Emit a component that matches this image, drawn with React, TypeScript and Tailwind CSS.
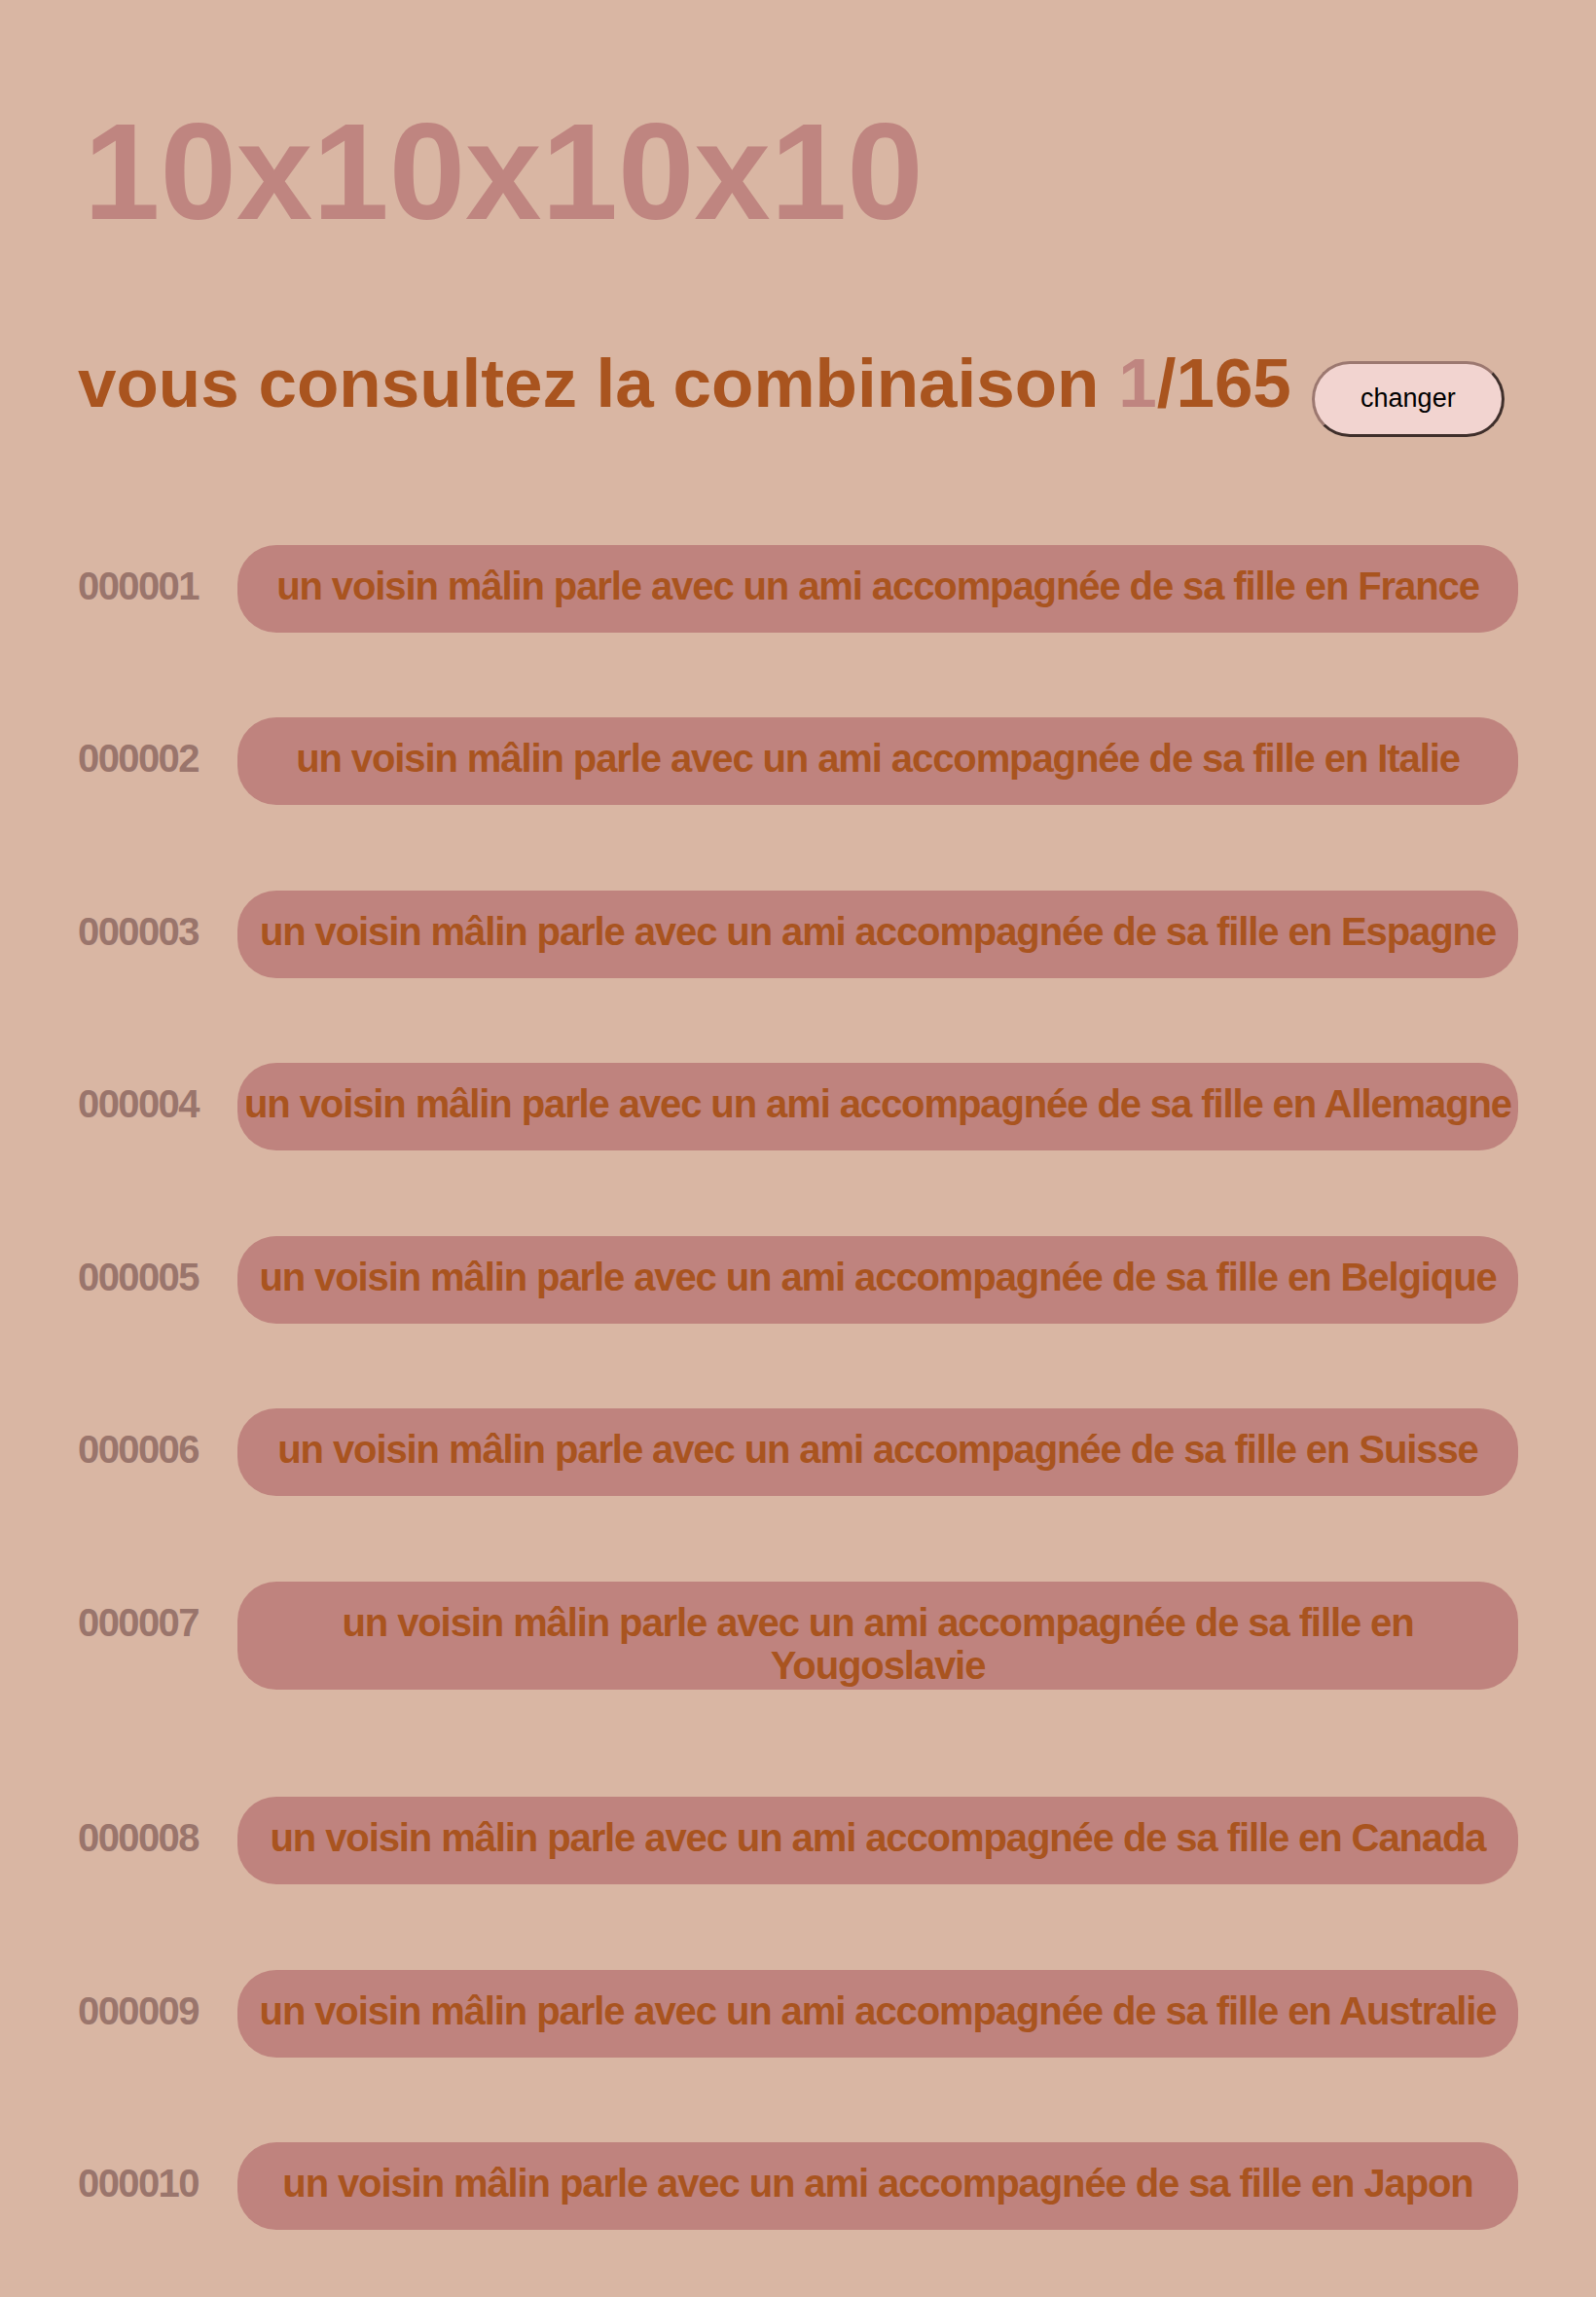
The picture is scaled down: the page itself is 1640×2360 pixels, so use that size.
import React from "react";

const places = [
  "France",
  "Italie",
  "Espagne",
  "Allemagne",
  "Belgique",
  "Suisse",
  "Yougoslavie",
  "Canada",
  "Australie",
  "Japon",
];

export default function App() {
  return (
    <div className="min-h-screen w-full bg-[#d9b6a3] font-['Liberation_Sans',Arial,Helvetica,sans-serif] px-[80px] pt-[96px] pb-[68px]">
      <h1 className="ml-[6px] text-[141px] leading-[161px] font-bold text-[#bf8580] m-0">
        10x10x10x10
      </h1>

      <div className="mt-[97px] flex items-baseline gap-[21px]">
        <h2 className="text-[71px] leading-[80px] font-bold text-[#a9541f] m-0 whitespace-nowrap">
          vous consultez la combinaison <span className="text-[#bf8580]">1</span>/165
        </h2>
        <button
          type="button"
          className="inline-flex items-center justify-center w-[198px] h-[78px] rounded-full bg-[#f2d4d0] border-[3px] border-t-[#9c7870] border-l-[#9c7870] border-r-[#3f2f2b] border-b-[#3f2f2b] text-[27px] leading-[31px] text-black"
        >
          changer
        </button>
      </div>

      <div className="mt-[111px] flex flex-col gap-[87.5px]">
        {places.map((p, i) => {
          const tall = p === "Yougoslavie";
          return (
            <div
              key={p}
              className={"flex items-baseline " + (tall ? "mb-[23px]" : "")}
            >
              <span className="w-[164px] shrink-0 text-[40px] leading-[44px] tracking-[-1.6px] font-bold text-[#9a756c]">
                {String(i + 1).padStart(6, "0")}
              </span>
              <p
                className={
                  "flex-1 m-0 min-h-[90px] pt-[20px] pb-[3px] rounded-[40px] bg-[#bf837e] text-center text-[40px] leading-[44px] tracking-[-1.1px] font-bold text-[#a9541f] " +
                  (tall ? "" : "whitespace-nowrap")
                }
              >
                un voisin mâlin parle avec un ami accompagnée de sa fille en {p}
              </p>
            </div>
          );
        })}
      </div>
    </div>
  );
}
